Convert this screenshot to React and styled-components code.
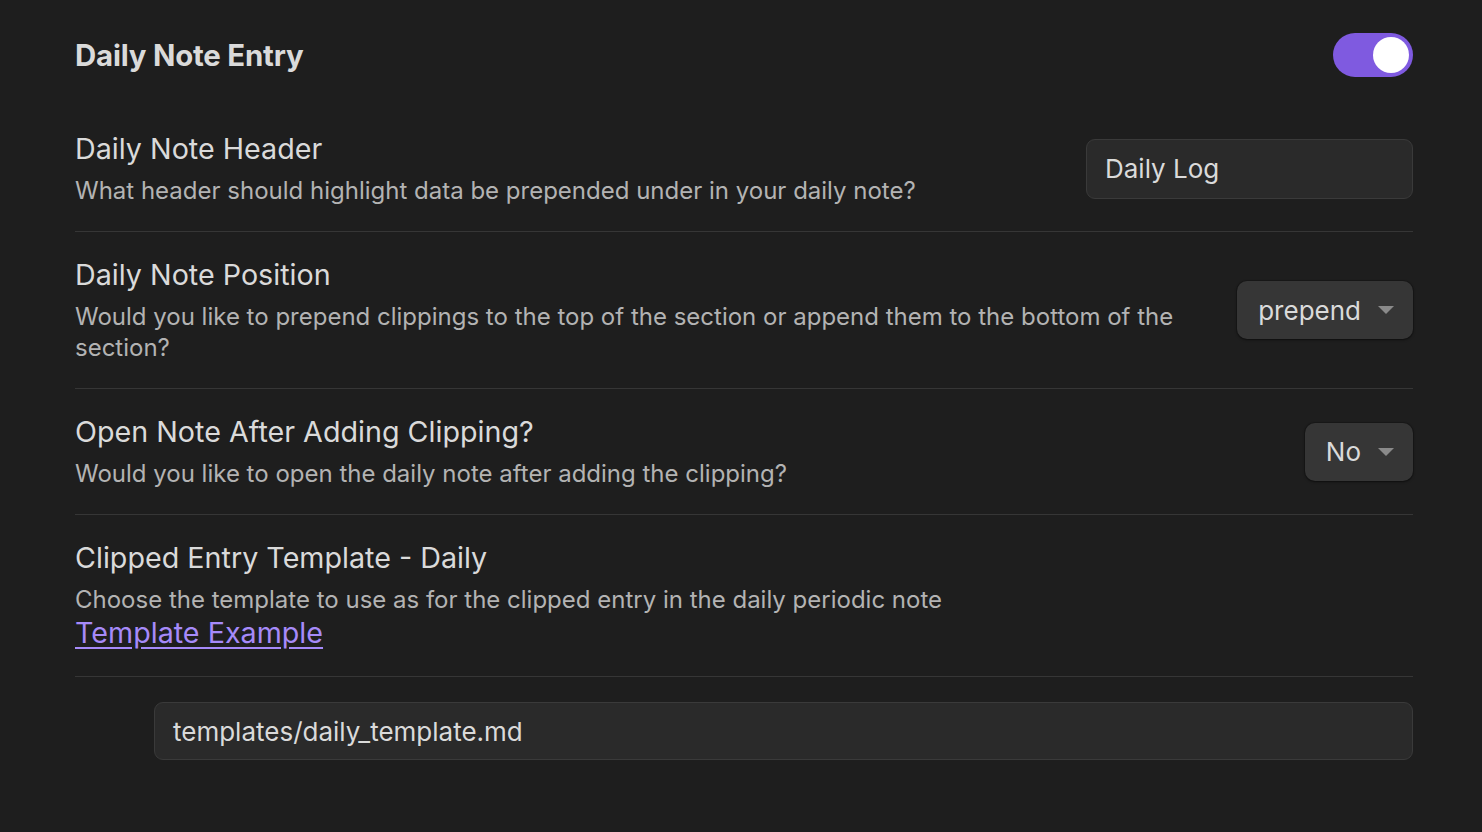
import React from 'react';
import styled, { createGlobalStyle } from 'styled-components';

const colors = {
   bg: '#1e1e1e',
   text: '#dadada',
   muted: '#b3b3b3',
   divider: '#363636',
   accent: '#7f5ae0',
   link: '#a68af9',
   inputBg: '#2a2a2a',
   inputBorder: '#3a3a3a',
   selectBg: '#363636',
};

const GlobalStyle = createGlobalStyle`
   body {
      margin: 0;
      background: ${colors.bg};
      font-family: Inter, "Noto Sans", "Liberation Sans", sans-serif;
      color: ${colors.text};
   }
`;

const Page = styled.div`
   min-height: 832px;
   box-sizing: border-box;
   padding: 33px 69px 0 75px;
   background: ${colors.bg};
`;

const HeadingRow = styled.div`
   display: flex;
   align-items: center;
   justify-content: space-between;
   height: 44px;
   margin-bottom: 28px;
`;

const Heading = styled.h2`
   margin: 0;
   font-size: 29.4px;
   font-weight: 700;
   letter-spacing: -0.2px;
   color: ${colors.text};
`;

const Toggle = styled.div`
   position: relative;
   width: 80px;
   height: 44px;
   border-radius: 22px;
   background: ${colors.accent};

   &::after {
      content: '';
      position: absolute;
      top: 4px;
      right: 4px;
      width: 36px;
      height: 36px;
      border-radius: 50%;
      background: #ffffff;
   }
`;

const Row = styled.div`
   display: flex;
   align-items: center;
   padding: ${({ first }) => (first ? '26px' : '25px')} 0 25px;
   border-top: ${({ first }) => (first ? 'none' : `1px solid ${colors.divider}`)};
`;

const Info = styled.div`
   flex: 1;
   margin-right: 24px;
`;

const Name = styled.div`
   font-size: 28.7px;
   line-height: 36px;
   color: ${colors.text};
`;

const Description = styled.div`
   margin-top: 8px;
   font-size: 24px;
   line-height: 31px;
   color: ${colors.muted};
`;

const Link = styled.a`
   display: block;
   font-size: 28.7px;
   line-height: 36px;
   color: ${colors.link};
   text-decoration: underline;
   text-underline-offset: 4px;
`;

const TextInput = styled.div`
   box-sizing: border-box;
   width: ${({ wide }) => (wide ? 'auto' : '327px')};
   flex: ${({ wide }) => (wide ? 1 : 'none')};
   margin-left: ${({ wide }) => (wide ? '79px' : '0')};
   height: ${({ wide }) => (wide ? '58px' : '60px')};
   display: flex;
   align-items: center;
   padding: 0 18px;
   background: ${colors.inputBg};
   border: 1.5px solid ${colors.inputBorder};
   border-radius: 9px;
   font-size: 26px;
   color: ${colors.text};
`;

const Select = styled.div`
   box-sizing: border-box;
   height: 58px;
   display: flex;
   align-items: center;
   gap: 16px;
   padding: 0 18px 0 21px;
   background: ${colors.selectBg};
   border-radius: 10px;
   box-shadow: 0 1px 3px rgba(0, 0, 0, 0.45), 0 0 0 1px rgba(0, 0, 0, 0.15);
   font-size: 26px;
   color: ${colors.text};
`;

const Caret = () => (
   <svg width="18" height="10" viewBox="0 0 18 10">
      <path d="M1 1 L17 1 L9 9 Z" fill="#8a8a8a" />
   </svg>
);

const Setting = ({ name, desc, first, children, link }) => (
   <Row first={first}>
      <Info>
         <Name>{name}</Name>
         <Description>{desc}</Description>
         {link && <Link href="#">{link}</Link>}
      </Info>
      {children}
   </Row>
);

export default function App() {
   return (
      <Page>
         <GlobalStyle />
         <HeadingRow>
            <Heading>Daily Note Entry</Heading>
            <Toggle />
         </HeadingRow>
         <Setting
            first
            name="Daily Note Header"
            desc="What header should highlight data be prepended under in your daily note?"
         >
            <TextInput>Daily Log</TextInput>
         </Setting>
         <Setting
            name="Daily Note Position"
            desc="Would you like to prepend clippings to the top of the section or append them to the bottom of the section?"
         >
            <Select>
               prepend
               <Caret />
            </Select>
         </Setting>
         <Setting
            name="Open Note After Adding Clipping?"
            desc="Would you like to open the daily note after adding the clipping?"
         >
            <Select>
               No
               <Caret />
            </Select>
         </Setting>
         <Setting
            name="Clipped Entry Template - Daily"
            desc="Choose the template to use as for the clipped entry in the daily periodic note"
            link="Template Example"
         />
         <Row>
            <TextInput wide>templates/daily_template.md</TextInput>
         </Row>
      </Page>
   );
}
